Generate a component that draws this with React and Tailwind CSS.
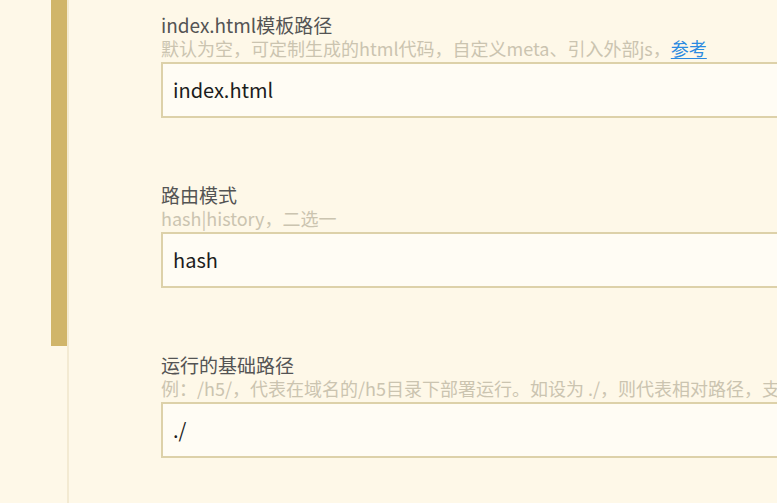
import React from 'react';

const fields = [
  {
    label: 'index.html模板路径',
    hint: '默认为空，可定制生成的html代码，自定义meta、引入外部js，',
    link: '参考',
    value: 'index.html',
  },
  {
    label: '路由模式',
    hint: 'hash|history，二选一',
    value: 'hash',
  },
  {
    label: '运行的基础路径',
    hint: '例：/h5/，代表在域名的/h5目录下部署运行。如设为 ./，则代表相对路径，支持文件协议打开',
    value: './',
  },
];

function Field({ label, hint, link, value }) {
  return (
    <div className="flex flex-col">
      <div className="text-[19px] leading-[22px] text-[#545454]">{label}</div>
      <div className="text-[18px] leading-[25px] text-[#cbc4b0] whitespace-nowrap">
        {hint}
        {link && <a className="text-[#2b8ae0] underline underline-offset-2">{link}</a>}
      </div>
      <div className="mt-px h-[56px] w-[700px] border-2 border-[#ddd1a9] bg-[#fffcf4] flex items-center px-[10px] text-[20px] text-[#1c1c1c]">
        {value}
      </div>
    </div>
  );
}

export default function App() {
  return (
    <div
      className="h-[503px] w-[777px] overflow-hidden bg-[#fef8e8] flex"
      style={{ fontFamily: '"Noto Sans CJK SC", "Noto Sans", sans-serif' }}
    >
      <div className="w-[51px] shrink-0" />
      <div className="w-[16px] shrink-0">
        <div className="h-[346px] bg-[#d0b56a]" />
      </div>
      <div className="w-[2px] shrink-0 bg-[#f3ead2]" />
      <div className="flex-1 pl-[92px] pt-[14px] flex flex-col gap-[66px] min-w-0">
        {fields.map((f) => (
          <Field key={f.label} {...f} />
        ))}
      </div>
    </div>
  );
}
